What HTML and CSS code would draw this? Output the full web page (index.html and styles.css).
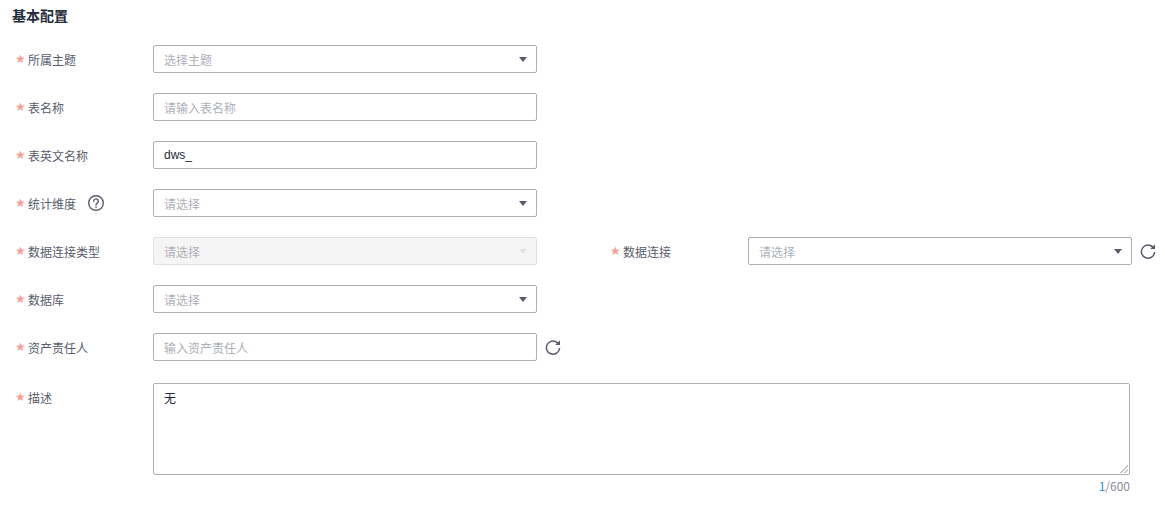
FILE: index.html
```html
<!DOCTYPE html>
<html lang="zh-CN">
<head>
<meta charset="utf-8">
<title>基本配置</title>
<link rel="stylesheet" href="styles.css">
</head>
<body>
<section class="form">
  <h2 class="title">基本配置</h2>

  <div class="row">
    <label class="label"><span class="star">★</span>所属主题</label>
    <div class="select"><span class="placeholder">选择主题</span><i class="caret"></i></div>
  </div>

  <div class="row">
    <label class="label"><span class="star">★</span>表名称</label>
    <input class="input" type="text" placeholder="请输入表名称">
  </div>

  <div class="row">
    <label class="label"><span class="star">★</span>表英文名称</label>
    <input class="input latin" type="text" value="dws_">
  </div>

  <div class="row">
    <label class="label"><span class="star">★</span>统计维度
      <svg class="help" width="18" height="18" viewBox="0 0 18 18" fill="none" stroke="#575d6c" stroke-width="1.4"><circle cx="9" cy="9" r="7.3"/><path d="M6.7 7.2a2.3 2.3 0 1 1 3.6 1.9c-.8.5-1.3 1-1.3 2" stroke-linecap="round"/><circle cx="9" cy="13" r=".5" fill="#575d6c" stroke-width=".6"/></svg>
    </label>
    <div class="select"><span class="placeholder">请选择</span><i class="caret"></i></div>
  </div>

  <div class="row">
    <label class="label"><span class="star">★</span>数据连接类型</label>
    <div class="select disabled"><span class="placeholder">请选择</span><i class="caret"></i></div>
    <label class="label second"><span class="star">★</span>数据连接</label>
    <div class="select"><span class="placeholder">请选择</span><i class="caret"></i></div>
    <svg class="refresh" width="16" height="16" viewBox="0 0 16 16" fill="none" stroke="#575d6c" stroke-width="1.5"><path d="M13.4 4.8A6.6 6.6 0 1 0 14.6 9"/><path d="M15 1.2v4.8H10.2" stroke="none" fill="#575d6c"/></svg>
  </div>

  <div class="row">
    <label class="label"><span class="star">★</span>数据库</label>
    <div class="select"><span class="placeholder">请选择</span><i class="caret"></i></div>
  </div>

  <div class="row wide-gap">
    <label class="label"><span class="star">★</span>资产责任人</label>
    <input class="input" type="text" placeholder="输入资产责任人">
    <svg class="refresh" width="16" height="16" viewBox="0 0 16 16" fill="none" stroke="#575d6c" stroke-width="1.5"><path d="M13.4 4.8A6.6 6.6 0 1 0 14.6 9"/><path d="M15 1.2v4.8H10.2" stroke="none" fill="#575d6c"/></svg>
  </div>

  <div class="row top">
    <label class="label"><span class="star">★</span>描述</label>
    <div class="area-wrap">
      <textarea class="area">无</textarea>
      <div class="count"><span class="count-now">1</span>/600</div>
    </div>
  </div>
</section>
</body>
</html>
```

FILE: styles.css
```css
* { box-sizing: border-box; }
html, body { margin: 0; background: #fff; }
body {
  font-family: "Noto Sans CJK SC", "Liberation Sans", sans-serif;
  font-size: 12px;
  color: #252b3a;
}
.form { padding: 6px 0 0 0; }
.title {
  margin: 0 0 20px 12px;
  font-size: 14px;
  line-height: 19px;
  font-weight: 700;
  color: #252b3a;
}
.row {
  display: flex;
  align-items: center;
  height: 28px;
  margin-bottom: 20px;
}
.row.wide-gap { margin-bottom: 22px; }
.row.top { height: auto; align-items: flex-start; margin-bottom: 0; }
.label {
  flex: 0 0 153px;
  display: flex;
  align-items: center;
  height: 28px;
  padding-left: 16px;
  color: #575d6c;
  white-space: nowrap;
}
.star {
  width: 12px;
  margin-left: -1px;
  margin-right: 1px;
  font-family: "DejaVu Sans", sans-serif;
  font-size: 12px;
  line-height: 29px;
  height: 28px;
  color: #fb9a96;
}
.second { margin-left: 58px; }
.help { margin-left: 11px; }
.select, .input {
  width: 384px;
  height: 28px;
  border: 1px solid #adb0b8;
  border-radius: 2px;
  background: #fff;
  font: inherit;
  color: #252b3a;
}
.select {
  display: flex;
  align-items: center;
  justify-content: space-between;
  padding: 0 9px 0 10px;
}
.input {
  padding: 0 10px;
  outline: none;
}
.latin { font-family: "Liberation Sans", sans-serif; }
.input::placeholder { color: #adb0b8; opacity: 1; }
.placeholder { color: #adb0b8; }
.caret {
  width: 0;
  height: 0;
  border-left: 4px solid transparent;
  border-right: 4px solid transparent;
  border-top: 5px solid #575d6c;
}
.disabled { background: #f5f5f6; border-color: #dfe1e6; }
.disabled .caret { border-top-color: #dfe1e6; }
.refresh { margin-left: 8px; flex: none; }
.area-wrap { width: 977px; }
.area {
  display: block;
  width: 977px;
  height: 92px;
  padding: 5px 10px;
  border: 1px solid #adb0b8;
  border-radius: 2px;
  font: inherit;
  line-height: 18px;
  color: #252b3a;
  outline: none;
}
.area::-webkit-resizer {
  background: linear-gradient(135deg, transparent 50%, #c0c2c8 50%, #c0c2c8 60%, transparent 60%, transparent 74%, #c0c2c8 74%, #c0c2c8 84%, transparent 84%) right 1px bottom 1px / 8px 8px no-repeat;
}
.count {
  margin-top: 3px;
  text-align: right;
  line-height: 16px;
  color: #8a8e99;
}
.count-now { color: #2f8fe0; }
```
